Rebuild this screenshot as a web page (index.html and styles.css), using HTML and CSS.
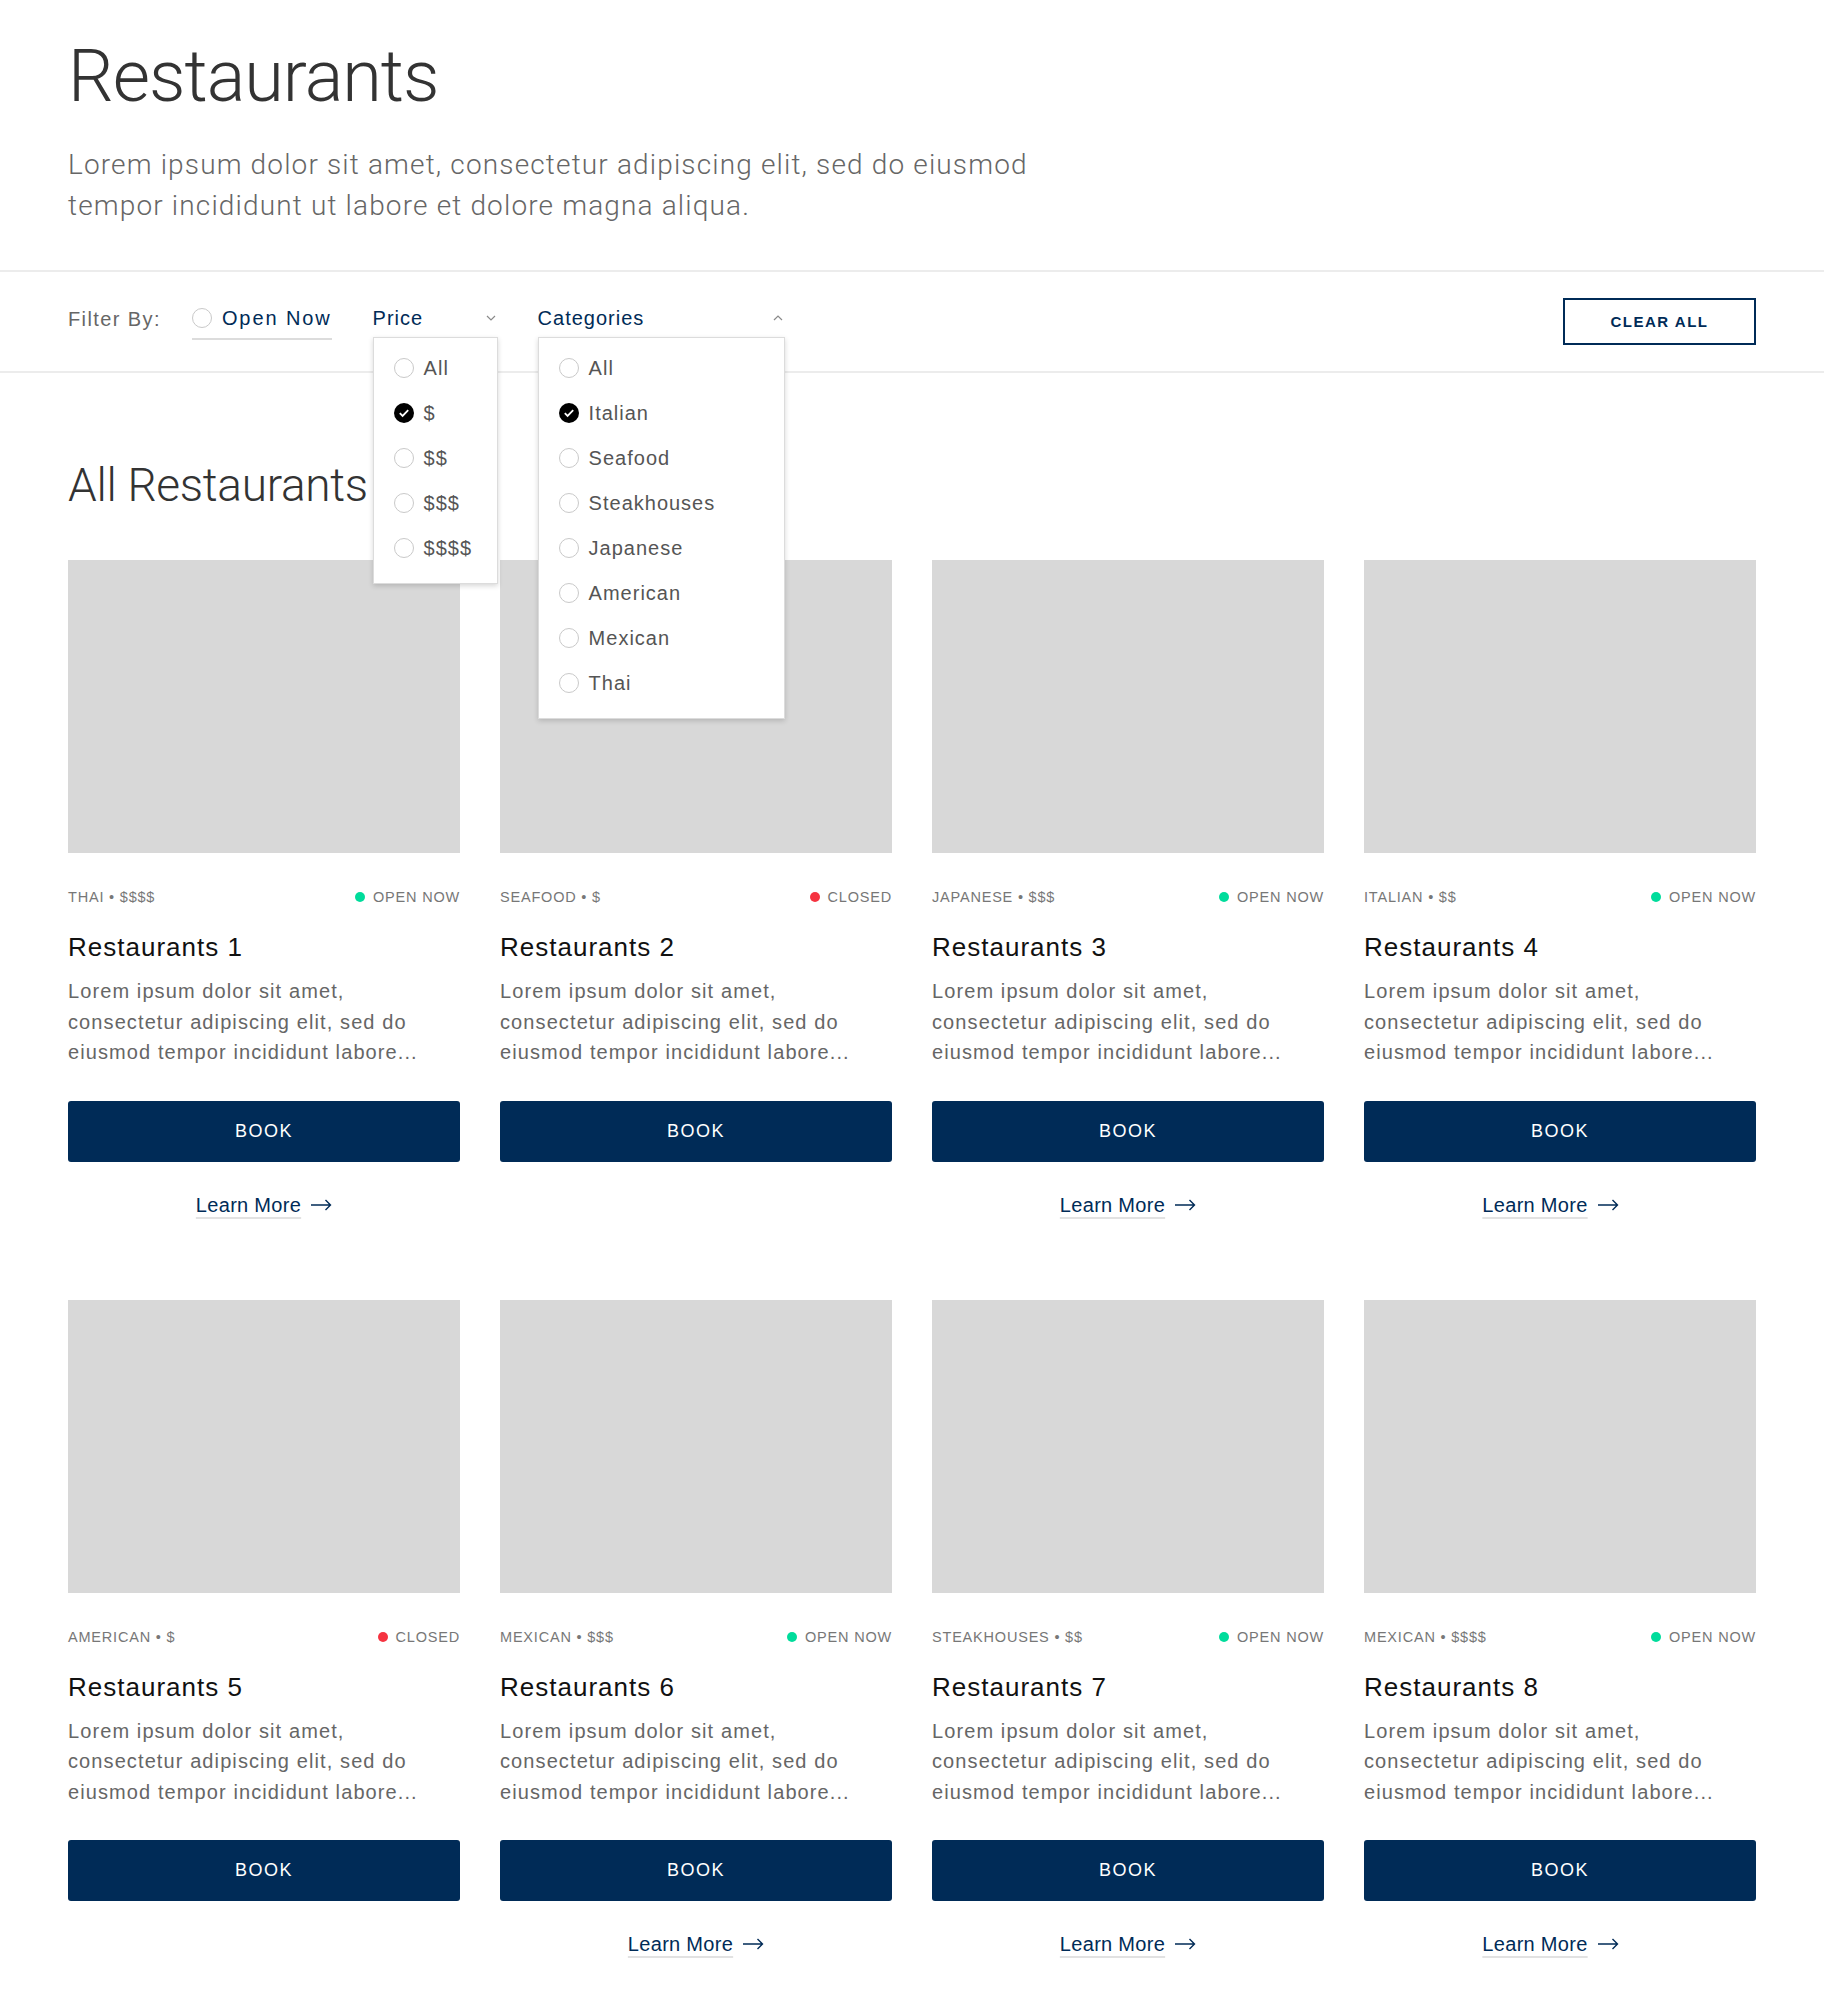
FILE: index.html
```html
<!DOCTYPE html>
<html lang="en">
<head>
<meta charset="utf-8">
<title>Restaurants</title>
<link rel="stylesheet" href="styles.css">
</head>
<body>
<header class="hero">
  <div class="container">
    <h1 class="hero__title">Restaurants</h1>
    <p class="hero__lead">Lorem ipsum dolor sit amet, consectetur adipiscing elit, sed do eiusmod<br>tempor incididunt ut labore et dolore magna aliqua.</p>
  </div>
</header>

<section class="filters">
  <div class="container filters__inner">
    <span class="filters__label">Filter By:</span>

    <label class="filter filter--toggle">
      <span class="radio"></span>
      <span class="filter__text filter__text--wide">Open Now</span>
    </label>

    <div class="filter filter--price">
      <span class="filter__text">Price</span>
      <svg class="chevron" width="10" height="6" viewBox="0 0 10 6"><path d="M1 1l4 4 4-4" fill="none" stroke="#8a8a8a" stroke-width="1.2"/></svg>
      <div class="dropdown dropdown--price">
        <div class="option"><span class="radio"></span>All</div>
        <div class="option"><span class="radio radio--checked"><svg viewBox="0 0 20 20" width="20" height="20"><path d="M5.8 10.2l2.8 2.8 5.6-5.8" fill="none" stroke="#fff" stroke-width="1.8"/></svg></span>$</div>
        <div class="option"><span class="radio"></span>$$</div>
        <div class="option"><span class="radio"></span>$$$</div>
        <div class="option"><span class="radio"></span>$$$$</div>
      </div>
    </div>

    <div class="filter filter--cat">
      <span class="filter__text">Categories</span>
      <svg class="chevron" width="10" height="6" viewBox="0 0 10 6"><path d="M1 5l4-4 4 4" fill="none" stroke="#8a8a8a" stroke-width="1.2"/></svg>
      <div class="dropdown dropdown--cat">
        <div class="option"><span class="radio"></span>All</div>
        <div class="option"><span class="radio radio--checked"><svg viewBox="0 0 20 20" width="20" height="20"><path d="M5.8 10.2l2.8 2.8 5.6-5.8" fill="none" stroke="#fff" stroke-width="1.8"/></svg></span>Italian</div>
        <div class="option"><span class="radio"></span>Seafood</div>
        <div class="option"><span class="radio"></span>Steakhouses</div>
        <div class="option"><span class="radio"></span>Japanese</div>
        <div class="option"><span class="radio"></span>American</div>
        <div class="option"><span class="radio"></span>Mexican</div>
        <div class="option"><span class="radio"></span>Thai</div>
      </div>
    </div>

    <button class="clear-btn" type="button">CLEAR ALL</button>
  </div>
</section>

<main class="container">
  <h2 class="section-title">All Restaurants</h2>
  <div class="grid">

    <article class="card">
      <div class="card__image"></div>
      <div class="card__meta"><span>THAI • $$$$</span><span class="status status--open">OPEN NOW</span></div>
      <h3 class="card__title">Restaurants 1</h3>
      <p class="card__desc">Lorem ipsum dolor sit amet, consectetur adipiscing elit, sed do eiusmod tempor incididunt labore...</p>
      <button class="card__book" type="button">BOOK</button>
      <a class="card__more" href="#"><span class="card__more-text">Learn More</span><svg width="21" height="12" viewBox="0 0 21 12"><path d="M0 6h19.5M14.5 1l5 5-5 5" fill="none" stroke="#002b57" stroke-width="1.4"/></svg></a>
    </article>

    <article class="card">
      <div class="card__image"></div>
      <div class="card__meta"><span>SEAFOOD • $</span><span class="status status--closed">CLOSED</span></div>
      <h3 class="card__title">Restaurants 2</h3>
      <p class="card__desc">Lorem ipsum dolor sit amet, consectetur adipiscing elit, sed do eiusmod tempor incididunt labore...</p>
      <button class="card__book" type="button">BOOK</button>
    </article>

    <article class="card">
      <div class="card__image"></div>
      <div class="card__meta"><span>JAPANESE • $$$</span><span class="status status--open">OPEN NOW</span></div>
      <h3 class="card__title">Restaurants 3</h3>
      <p class="card__desc">Lorem ipsum dolor sit amet, consectetur adipiscing elit, sed do eiusmod tempor incididunt labore...</p>
      <button class="card__book" type="button">BOOK</button>
      <a class="card__more" href="#"><span class="card__more-text">Learn More</span><svg width="21" height="12" viewBox="0 0 21 12"><path d="M0 6h19.5M14.5 1l5 5-5 5" fill="none" stroke="#002b57" stroke-width="1.4"/></svg></a>
    </article>

    <article class="card">
      <div class="card__image"></div>
      <div class="card__meta"><span>ITALIAN • $$</span><span class="status status--open">OPEN NOW</span></div>
      <h3 class="card__title">Restaurants 4</h3>
      <p class="card__desc">Lorem ipsum dolor sit amet, consectetur adipiscing elit, sed do eiusmod tempor incididunt labore...</p>
      <button class="card__book" type="button">BOOK</button>
      <a class="card__more" href="#"><span class="card__more-text">Learn More</span><svg width="21" height="12" viewBox="0 0 21 12"><path d="M0 6h19.5M14.5 1l5 5-5 5" fill="none" stroke="#002b57" stroke-width="1.4"/></svg></a>
    </article>

    <article class="card">
      <div class="card__image"></div>
      <div class="card__meta"><span>AMERICAN • $</span><span class="status status--closed">CLOSED</span></div>
      <h3 class="card__title">Restaurants 5</h3>
      <p class="card__desc">Lorem ipsum dolor sit amet, consectetur adipiscing elit, sed do eiusmod tempor incididunt labore...</p>
      <button class="card__book" type="button">BOOK</button>
    </article>

    <article class="card">
      <div class="card__image"></div>
      <div class="card__meta"><span>MEXICAN • $$$</span><span class="status status--open">OPEN NOW</span></div>
      <h3 class="card__title">Restaurants 6</h3>
      <p class="card__desc">Lorem ipsum dolor sit amet, consectetur adipiscing elit, sed do eiusmod tempor incididunt labore...</p>
      <button class="card__book" type="button">BOOK</button>
      <a class="card__more" href="#"><span class="card__more-text">Learn More</span><svg width="21" height="12" viewBox="0 0 21 12"><path d="M0 6h19.5M14.5 1l5 5-5 5" fill="none" stroke="#002b57" stroke-width="1.4"/></svg></a>
    </article>

    <article class="card">
      <div class="card__image"></div>
      <div class="card__meta"><span>STEAKHOUSES • $$</span><span class="status status--open">OPEN NOW</span></div>
      <h3 class="card__title">Restaurants 7</h3>
      <p class="card__desc">Lorem ipsum dolor sit amet, consectetur adipiscing elit, sed do eiusmod tempor incididunt labore...</p>
      <button class="card__book" type="button">BOOK</button>
      <a class="card__more" href="#"><span class="card__more-text">Learn More</span><svg width="21" height="12" viewBox="0 0 21 12"><path d="M0 6h19.5M14.5 1l5 5-5 5" fill="none" stroke="#002b57" stroke-width="1.4"/></svg></a>
    </article>

    <article class="card">
      <div class="card__image"></div>
      <div class="card__meta"><span>MEXICAN • $$$$</span><span class="status status--open">OPEN NOW</span></div>
      <h3 class="card__title">Restaurants 8</h3>
      <p class="card__desc">Lorem ipsum dolor sit amet, consectetur adipiscing elit, sed do eiusmod tempor incididunt labore...</p>
      <button class="card__book" type="button">BOOK</button>
      <a class="card__more" href="#"><span class="card__more-text">Learn More</span><svg width="21" height="12" viewBox="0 0 21 12"><path d="M0 6h19.5M14.5 1l5 5-5 5" fill="none" stroke="#002b57" stroke-width="1.4"/></svg></a>
    </article>

  </div>
</main>
</body>
</html>
```

FILE: styles.css
```css
* { box-sizing: border-box; }

body {
  margin: 0;
  background: #fff;
  font-family: "Liberation Sans", Arial, sans-serif;
  color: #222;
}

.container {
  max-width: 1688px;
  margin: 0 auto;
}

/* Hero */
.hero {
  padding: 40px 0 44px;
  border-bottom: 2px solid #ececec;
}

.hero__title {
  margin: 0;
  font-family: Roboto, "Liberation Sans", sans-serif;
  font-weight: 300;
  font-size: 72px;
  line-height: 74px;
  letter-spacing: -1px;
  color: #333;
}

.hero__lead {
  margin: 30px 0 0;
  font-family: Roboto, "Liberation Sans", sans-serif;
  font-weight: 300;
  font-size: 28px;
  line-height: 41px;
  letter-spacing: 1.15px;
  color: #666;
}

/* Filters */
.filters {
  height: 101px;
  border-bottom: 2px solid #ececec;
}

.filters__inner {
  display: flex;
  align-items: center;
  height: 100%;
}

.filters__label {
  margin-bottom: 4px;
  font-size: 20px;
  letter-spacing: 1.4px;
  color: #666;
}

.filter {
  position: relative;
  display: flex;
  align-items: center;
  padding: 2px 0 8px;
  border-bottom: 2px solid transparent;
}

.filter__text {
  font-size: 20px;
  line-height: 24px;
  letter-spacing: 1px;
  color: #002b57;
}

.filter__text--wide { letter-spacing: 1.9px; }

.filter--toggle {
  margin-left: 31px;
  border-bottom-color: #dcdcdc;
}

.filter--toggle .radio { margin-right: 10px; }

.filter--price {
  width: 125px;
  margin-left: 41px;
  justify-content: space-between;
  padding-right: 2px;
}

.filter--cat {
  width: 247px;
  margin-left: 40px;
  justify-content: space-between;
  padding-right: 2px;
}

.chevron { display: block; }

.radio {
  display: inline-block;
  width: 20px;
  height: 20px;
  flex: none;
  border: 1.5px solid #c9c9c9;
  border-radius: 50%;
}

.radio--checked {
  border: none;
  background: #000;
}

.radio--checked svg { display: block; }

.dropdown {
  position: absolute;
  left: 0;
  top: calc(100% - 1px);
  z-index: 10;
  padding: 8px 0 12px;
  background: #fff;
  border: 1px solid #dcdcdc;
  box-shadow: 0 2px 5px rgba(0, 0, 0, 0.16);
}

.dropdown--price { width: 125px; }
.dropdown--cat { width: 247px; }

.option {
  display: flex;
  align-items: center;
  height: 45px;
  padding-left: 20px;
  font-size: 20px;
  letter-spacing: 1px;
  color: #555;
}

.option .radio { margin-right: 10px; }

.clear-btn {
  margin-left: auto;
  width: 193px;
  height: 47px;
  padding: 0;
  background: #fff;
  border: 2px solid #002b57;
  color: #002b57;
  font-family: "Liberation Sans", Arial, sans-serif;
  font-size: 15px;
  font-weight: 700;
  letter-spacing: 1.5px;
}

/* Listing */
.section-title {
  margin: 88px 0 51px;
  font-family: Roboto, "Liberation Sans", sans-serif;
  font-weight: 300;
  font-size: 46px;
  line-height: 48px;
  letter-spacing: -0.3px;
  color: #333;
}

.grid {
  display: grid;
  grid-template-columns: repeat(4, 1fr);
  column-gap: 40px;
  row-gap: 83px;
  padding-bottom: 40px;
}

.card {
  display: flex;
  flex-direction: column;
}

.card__image {
  height: 293px;
  background: #d8d8d8;
}

.card__meta {
  display: flex;
  justify-content: space-between;
  align-items: center;
  margin-top: 34px;
  font-size: 14.5px;
  line-height: 20px;
  letter-spacing: 0.8px;
  color: #777;
}

.status {
  display: flex;
  align-items: center;
}

.status::before {
  content: "";
  width: 10px;
  height: 10px;
  margin-right: 8px;
  border-radius: 50%;
}

.status--open::before { background: #00dc9b; }
.status--closed::before { background: #f53340; }

.card__title {
  margin: 24px 0 0;
  font-size: 26px;
  font-weight: 400;
  line-height: 32px;
  letter-spacing: 1px;
  color: #111;
}

.card__desc {
  margin: 13px 0 0;
  font-size: 20px;
  line-height: 30.5px;
  letter-spacing: 1.1px;
  color: #666;
}

.card__book {
  margin-top: 33px;
  width: 100%;
  height: 61px;
  padding: 0;
  border: none;
  border-radius: 3px;
  background: #002b57;
  color: #fff;
  font-family: "Liberation Sans", Arial, sans-serif;
  font-size: 18px;
  letter-spacing: 1.5px;
}

.card__more {
  align-self: center;
  display: flex;
  align-items: center;
  gap: 10px;
  margin-top: 31px;
  font-size: 20px;
  line-height: 24px;
  letter-spacing: 0.3px;
  color: #002b57;
  text-decoration: none;
}

.card:nth-child(4n) .card__more { margin-right: 19px; }

.card__more-text {
  text-decoration: underline;
  text-decoration-color: #e2e2e2;
  text-decoration-thickness: 2px;
  text-underline-offset: 5px;
}

.card__more svg { display: block; }
```
